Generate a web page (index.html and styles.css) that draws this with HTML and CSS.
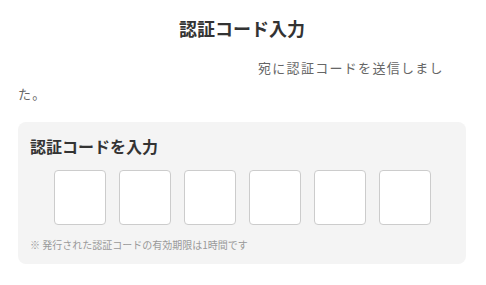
FILE: index.html
```html
<!DOCTYPE html>
<html lang="ja">
<head>
<meta charset="utf-8">
<link rel="stylesheet" href="styles.css">
</head>
<body>
<main class="page">
  <h1 class="title">認証コード入力</h1>
  <p class="lead"><span class="email"></span>宛に認証コードを送信しました。</p>
  <section class="card">
    <h2 class="card-title">認証コードを入力</h2>
    <div class="code-row">
      <input class="code-box" type="text" maxlength="1">
      <input class="code-box" type="text" maxlength="1">
      <input class="code-box" type="text" maxlength="1">
      <input class="code-box" type="text" maxlength="1">
      <input class="code-box" type="text" maxlength="1">
      <input class="code-box" type="text" maxlength="1">
    </div>
    <p class="note">※ 発行された認証コードの有効期限は1時間です</p>
  </section>
</main>
</body>
</html>
```
FILE: styles.css
```css
* { box-sizing: border-box; }
html, body { margin: 0; padding: 0; background: #fff; }
body {
  font-family: "Noto Sans CJK JP", "Noto Sans", sans-serif;
  color: #333;
}
.page {
  width: 486px;
  padding: 10px 20px 0 18px;
}
.title {
  margin: 0;
  font-size: 18px;
  line-height: 36px;
  font-weight: 700;
  text-align: center;
  color: #333;
}
.lead {
  margin: 9px 0 0;
  font-size: 13px;
  line-height: 26px;
  letter-spacing: 0.1em;
  color: #666;
}
.email {
  display: inline-block;
  width: 240px;
}
.card {
  margin-top: 15px;
  background: #f4f4f4;
  border-radius: 8px;
  padding: 12px;
}
.card-title {
  margin: 0;
  font-size: 16px;
  line-height: 24px;
  font-weight: 700;
  color: #333;
}
.code-row {
  margin-top: 12px;
  display: flex;
  justify-content: center;
  gap: 13px;
}
.code-box {
  width: 52px;
  height: 55px;
  border: 1px solid #ccc;
  border-radius: 4px;
  background: #fff;
  padding: 0;
  margin: 0;
  font-size: 20px;
  text-align: center;
}
.note {
  margin: 12px 0 0;
  font-size: 10px;
  line-height: 15px;
  color: #999;
}
```
